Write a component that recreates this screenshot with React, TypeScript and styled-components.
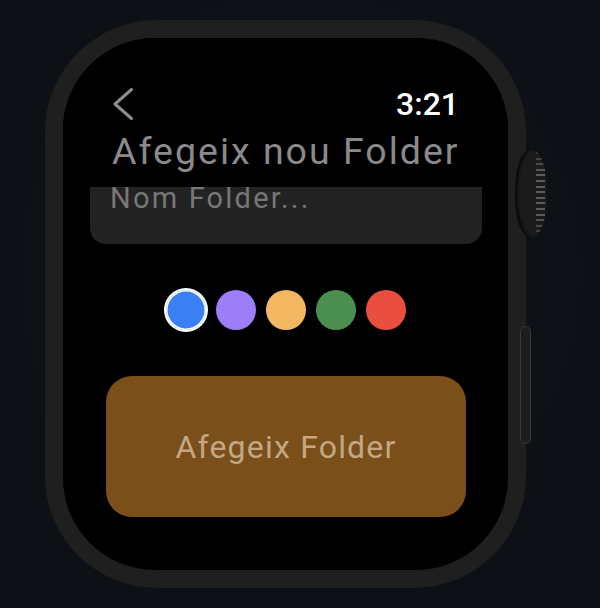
import React from "react";
import styled, { createGlobalStyle } from "styled-components";

const GlobalStyle = createGlobalStyle`
  html, body {
    margin: 0;
    padding: 0;
    width: 600px;
    height: 608px;
    overflow: hidden;
    background: #0e1116;
  }
  * { box-sizing: border-box; }
`;

const Page = styled.div`
  width: 600px;
  height: 608px;
  padding: 20px 0 0 45px;
  background: radial-gradient(circle at 50% 45%, #11151b 0%, #0d1015 70%);
  font-family: Roboto, "Liberation Sans", Arial, sans-serif;
`;

const Case = styled.div`
  position: relative;
  width: 481px;
  height: 568px;
  padding: 18px;
  border-radius: 112px;
  background: #1f1f1f;
`;

const Crown = styled.div`
  position: absolute;
  left: 470px;
  top: 129px;
  width: 32px;
  height: 89px;
  border-radius: 16px / 40px;
  background: #1b1b1b;
  box-shadow: inset 3px 0 2px #0c0c0c;
  overflow: hidden;
`;

const Ridges = styled.div`
  position: absolute;
  right: 2px;
  top: 3px;
  bottom: 3px;
  width: 9px;
  background: repeating-linear-gradient(
    to bottom,
    #5d5d5d 0px,
    #5d5d5d 2px,
    transparent 2px,
    transparent 5.6px
  );
  -webkit-mask-image: linear-gradient(to bottom, rgba(0,0,0,0.45), #000 25%, #000 75%, rgba(0,0,0,0.45));
  mask-image: linear-gradient(to bottom, rgba(0,0,0,0.45), #000 25%, #000 75%, rgba(0,0,0,0.45));
`;

const SideButton = styled.div`
  position: absolute;
  left: 475px;
  top: 306px;
  width: 11px;
  height: 118px;
  border-radius: 6px;
  background: #1d1d1d;
  border: 1px solid #3b3b3b;
`;

const Screen = styled.div`
  width: 445px;
  height: 532px;
  border-radius: 92px;
  background: #000;
  overflow: hidden;
  display: flex;
  flex-direction: column;
`;

const Header = styled.header`
  position: relative;
  z-index: 1;
  background: #000;
  padding: 48px 49px 14px 49px;
`;

const TopRow = styled.div`
  height: 36px;
  display: flex;
  align-items: center;
  justify-content: space-between;
`;

const BackButton = styled.button`
  display: flex;
  padding: 0;
  margin: 0;
  border: 0;
  background: none;
  cursor: pointer;
`;

const Time = styled.span`
  font-size: 32px;
  line-height: 36px;
  font-weight: 500;
  color: #fff;
`;

const Title = styled.h1`
  margin: 7px 0 0;
  font-size: 37.5px;
  line-height: 44px;
  font-weight: 400;
  letter-spacing: 2px;
  color: #8a8a8a;
  white-space: nowrap;
`;

const Viewport = styled.div`
  flex: 1;
  overflow: hidden;
`;

const ScrollContent = styled.div`
  display: flex;
  flex-direction: column;
  align-items: stretch;
`;

const Field = styled.div`
  margin: 0 26px 0 27px;
  padding: 26px 20px 29px;
  border-radius: 16px;
  background: #232323;
  font-size: 29px;
  line-height: 34px;
  letter-spacing: 2.2px;
  color: #777;
  white-space: nowrap;
`;

const Swatches = styled.div`
  margin-top: 46px;
  display: flex;
  justify-content: center;
  gap: 10px;
`;

const Swatch = styled.button<{ $color: string; $selected?: boolean }>`
  width: 40px;
  height: 40px;
  padding: 0;
  border: 0;
  border-radius: 50%;
  background: ${(p) => p.$color};
  box-shadow: ${(p) =>
    p.$selected ? "0 0 0 2px #fff, inset 0 0 0 1.5px #fff" : "none"};
  cursor: pointer;
`;

const AddButton = styled.button`
  margin: 46px 42px 0 43px;
  height: 141px;
  border: 0;
  border-radius: 26px;
  background: #7a4f1a;
  color: #c4a783;
  font-family: Roboto, "Liberation Sans", Arial, sans-serif;
  font-size: 32px;
  letter-spacing: 1.2px;
  display: flex;
  align-items: center;
  justify-content: center;
  cursor: pointer;
`;

const colors = ["#3b7ff5", "#9d7ef6", "#f5b862", "#4a8f50", "#ea4e3e"];

function Chevron() {
  return (
    <svg width="22" height="34" viewBox="0 0 22 34" fill="none">
      <path
        d="M19.5 2.5 L3 17 L19.5 31.5"
        stroke="#8e8e8e"
        strokeWidth="3"
        strokeLinecap="round"
        strokeLinejoin="round"
      />
    </svg>
  );
}

export default function App() {
  const scrollOffset = 32;
  return (
    <>
      <GlobalStyle />
      <Page>
        <Case>
          <Crown>
            <Ridges />
          </Crown>
          <SideButton />
          <Screen>
            <Header>
              <TopRow>
                <BackButton aria-label="Enrere">
                  <Chevron />
                </BackButton>
                <Time>3:21</Time>
              </TopRow>
              <Title>Afegeix nou Folder</Title>
            </Header>
            <Viewport>
              <ScrollContent style={{ transform: `translateY(-${scrollOffset}px)` }}>
                <Field>Nom Folder...</Field>
                <Swatches>
                  {colors.map((c, i) => (
                    <Swatch key={c} $color={c} $selected={i === 0} />
                  ))}
                </Swatches>
                <AddButton>Afegeix Folder</AddButton>
              </ScrollContent>
            </Viewport>
          </Screen>
        </Case>
      </Page>
    </>
  );
}
